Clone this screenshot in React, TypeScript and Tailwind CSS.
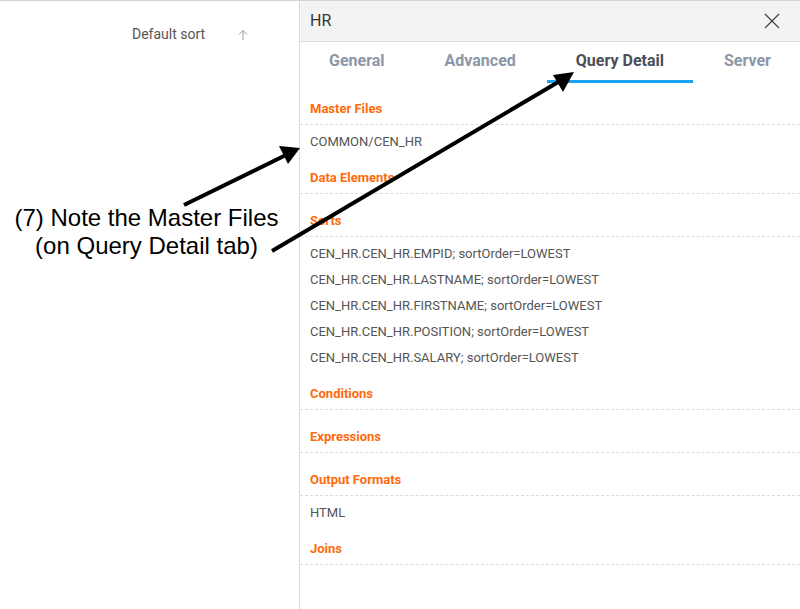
import React from 'react';

const TABS = ['General', 'Advanced', 'Query Detail', 'Server'];
const ACTIVE_TAB = 'Query Detail';

interface Section {
  title: string;
  items: string[];
}

const SECTIONS: Section[] = [
  { title: 'Master Files', items: ['COMMON/CEN_HR'] },
  { title: 'Data Elements', items: [] },
  {
    title: 'Sorts',
    items: [
      'CEN_HR.CEN_HR.EMPID; sortOrder=LOWEST',
      'CEN_HR.CEN_HR.LASTNAME; sortOrder=LOWEST',
      'CEN_HR.CEN_HR.FIRSTNAME; sortOrder=LOWEST',
      'CEN_HR.CEN_HR.POSITION; sortOrder=LOWEST',
      'CEN_HR.CEN_HR.SALARY; sortOrder=LOWEST',
    ],
  },
  { title: 'Conditions', items: [] },
  { title: 'Expressions', items: [] },
  { title: 'Output Formats', items: ['HTML'] },
  { title: 'Joins', items: [] },
];

function SectionBlock({ section }: { section: Section }): React.ReactElement {
  return (
    <div>
      <div className="pt-[15px] pb-[7px] px-[10px] border-b border-dashed border-[#dcdcdc] text-[13px] leading-[16px] font-bold text-[#ff6a0c]">
        {section.title}
      </div>
      <div className="pt-[4px]">
        {section.items.map((item) => (
          <div key={item} className="h-[26px] px-[10px] flex items-center text-[13px] text-[#555]">
            {item}
          </div>
        ))}
      </div>
    </div>
  );
}

// annotation arrows drawn over the page
function Arrows(): React.ReactElement {
  return (
    <svg className="absolute inset-0 pointer-events-none" width="800" height="609" viewBox="0 0 800 609">
      <line x1="184" y1="204" x2="286" y2="154" stroke="#000" strokeWidth="4" />
      <polygon points="300,147 279,145 288,163" fill="#000" />
      <line x1="272" y1="250" x2="560" y2="80" stroke="#000" strokeWidth="4" />
      <polygon points="574,71 553,74 563,91" fill="#000" />
    </svg>
  );
}

export default function App(): React.ReactElement {
  return (
    <div
      className="relative w-[800px] h-[609px] bg-white border-t border-[#d4d4d4] overflow-hidden flex"
      style={{ fontFamily: 'Roboto, "Liberation Sans", sans-serif' }}
    >
      {/* Left side */}
      <div className="w-[299px] shrink-0">
        <div className="flex items-center h-[67px] pl-[132px] text-[14px] text-[#555]">
          <span>Default sort</span>
          <svg className="ml-[32px]" width="12" height="12" viewBox="0 0 12 12" fill="none" stroke="#9a9a9a" strokeWidth="1">
            <path d="M6 11V1.5M2 5.5l4-4 4 4" />
          </svg>
        </div>
      </div>

      {/* Right panel */}
      <div className="flex-1 border-l border-[#dcdcdc] flex flex-col">
        <div className="h-[41px] bg-[#f3f3f3] border-b border-[#dcdcdc] flex items-center justify-between pl-[10px] pr-[20px]">
          <span className="text-[16px] text-[#333]">HR</span>
          <svg width="16" height="16" viewBox="0 0 16 16" stroke="#444" strokeWidth="1.3">
            <path d="M1 1l14 14M15 1L1 15" />
          </svg>
        </div>

        <div className="flex justify-between pb-[3px]">
          {TABS.map((tab) => (
            <div
              key={tab}
              className={`h-[41px] px-[29px] flex items-center text-[16px] font-bold border-b-[3px] ${
                tab === ACTIVE_TAB ? 'text-[#4a4e5a] border-[#1aa3f5]' : 'text-[#8c96a6] border-transparent'
              }`}
            >
              {tab}
            </div>
          ))}
        </div>

        {SECTIONS.map((section) => (
          <SectionBlock key={section.title} section={section} />
        ))}
      </div>

      <div
        className="absolute left-0 top-[203px] w-[293px] text-center text-[24px] leading-[28px] text-black"
        style={{ fontFamily: '"Liberation Sans", Arial, sans-serif' }}
      >
        <div>(7) Note the Master Files</div>
        <div>(on Query Detail tab)</div>
      </div>

      <Arrows />
    </div>
  );
}
